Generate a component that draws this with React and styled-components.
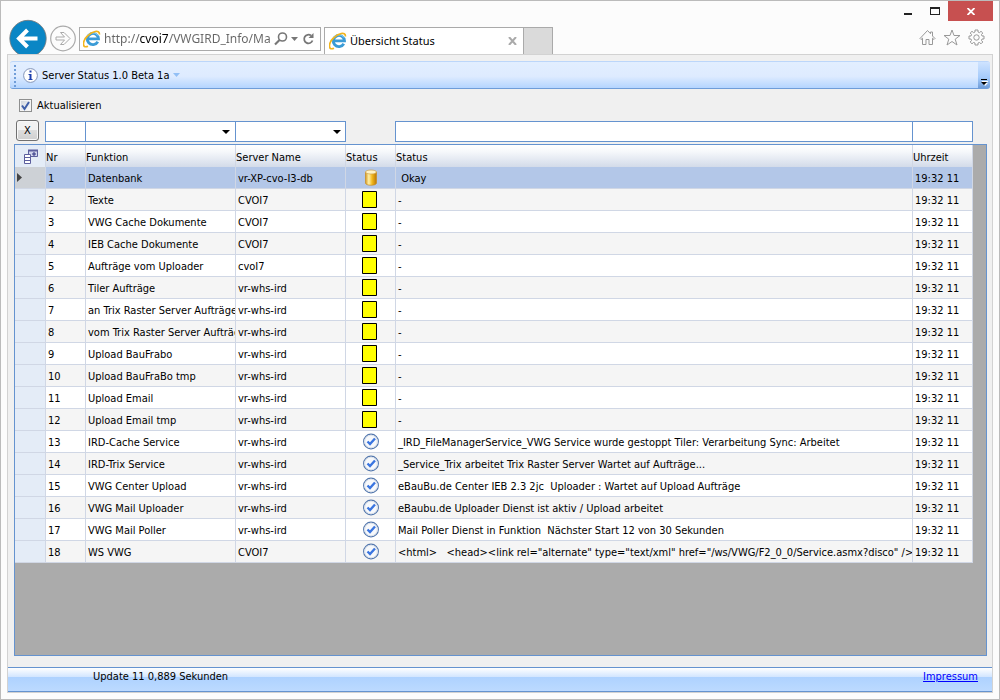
import React, {useState} from 'react';
import styled, {createGlobalStyle, css} from 'styled-components';

const GlobalStyle = createGlobalStyle`
  * {
    box-sizing: border-box;
  }

  body {
    margin: 0;
    color: #000;
    font: 11px/15px "DejaVu Sans Condensed", "DejaVu Sans", sans-serif;
  }

  button, input, select {
    margin: 0;
    padding: 0;
    border: 0;
    border-radius: 0;
    background: none;
    color: inherit;
    font: inherit;
  }

  svg {
    display: block;
    flex: none;
  }
`;

const Window = styled.div`
  display: flex;
  flex-direction: column;
  min-height: 100vh;
  padding: 0 6px 6px;
  border: 1px solid #bbb;
  background-color: #fcfcfc;
`;

const TitleBar = styled.header`
  display: flex;
  justify-content: space-between;
  height: 53px;
`;

const Navigation = styled.div`
  display: flex;
  align-items: flex-end;
`;

const NavButton = styled.button`
  width: ${props => props.$width}px;
  height: 36px;
  overflow: hidden;
`;

const AddressBar = styled.form`
  display: flex;
  align-items: center;
  gap: 3px;
  width: 242px;
  height: 24px;
  margin: 0 3px 3px 2px;
  padding: 0 4px 0 3px;
  border: 1px solid #aaa;
  background-color: #fff;
`;

// the host name is darker than the rest of the address
const AddressInput = styled.input`
  flex: 1;
  min-width: 0;
  outline: none;
  background: linear-gradient(to right, #666 36px, #000 36px, #000 65px, #666 65px);
  background-clip: text;
  -webkit-background-clip: text;
  color: transparent;
  font: 12px/20px "Noto Sans", sans-serif;
`;

const IconButton = styled.button`
  display: grid;
  place-items: center;
  flex: none;
  color: #777;
`;

const Tab = styled.div`
  display: flex;
  align-items: center;
  gap: 3px;
  width: 200px;
  height: 27px;
  padding: 0 6px 0 4px;
  border: 1px solid #aaa;
  border-bottom: 0;
  background-color: #fff;
  font: 11px/18px "Noto Sans", sans-serif;

  span {
    flex: 1;
  }
`;

const NewTab = styled.button`
  width: 29px;
  height: 27px;
  border: 1px solid #aaa;
  border-width: 1px 1px 0 0;
  background-color: #dadada;
`;

const WindowSide = styled.div`
  display: flex;
  flex-direction: column;
  align-items: flex-end;
  gap: 8px;
`;

const WindowControls = styled.div`
  display: flex;
`;

const WindowButton = styled.button`
  display: grid;
  place-items: center;
  width: ${props => props.$close ? 45 : 27}px;
  height: 20px;
  background-color: ${props => props.$close ? '#c75050' : 'transparent'};
`;

const Tools = styled.div`
  display: flex;
  gap: 7px;
  padding-right: 8px;
`;

const Page = styled.main`
  display: flex;
  flex: 1;
  flex-direction: column;
  border: 1px solid #d2d2d2;
  background-color: #f0f0f0;
`;

const Toolbar = styled.div`
  display: flex;
  height: 28px;
  margin: 6px 2px 0;
  border-top: 1px solid #bcd6fa;
  border-bottom: 1px solid #6f9dd9;
  border-radius: 3px;
  overflow: hidden;
  background: linear-gradient(#e2eeff, #deebff 55%, #b4d5ff);
`;

const Grip = styled.div`
  width: 2px;
  margin: 3px 7px 1px 4px;
  background: repeating-linear-gradient(#6f9dd9 0 2px, transparent 2px 4px);
`;

const MenuButton = styled.button`
  display: flex;
  align-items: center;
  gap: 4px;
  margin-right: auto;
`;

const Overflow = styled.button`
  display: flex;
  align-items: flex-end;
  justify-content: center;
  width: 12px;
  padding-bottom: 2px;
  background: linear-gradient(#cfe3ff, #a5cbfb 60%, #6f9dd9);
`;

const Refresh = styled.label`
  display: flex;
  align-items: center;
  gap: 5px;
  align-self: flex-start;
  height: 20px;
  margin: 6px 11px 0;
`;

const CheckFrame = styled.span`
  display: grid;
  width: 13px;
  height: 13px;

  > * {
    grid-area: 1 / 1;
  }

  svg {
    pointer-events: none;
    visibility: hidden;
  }

  input:checked + svg {
    visibility: visible;
  }
`;

const CheckInput = styled.input`
  appearance: none;
  width: 13px;
  height: 13px;
  border: 1px solid #8e8f8f;
  background: linear-gradient(135deg, #cdd3da, #fff);
  box-shadow: inset 0 0 0 1px #f4f4f4;
`;

const Filters = styled.div`
  display: grid;
  grid-template-columns: 30px 40px 150px 110px 50px 1fr 61px;
  height: 24px;
  margin: 5px 19px 0 7px;
`;

const fieldStyle = css`
  width: 100%;
  min-width: 0;
  height: 21px;
  padding: 0 3px;
  border: 1px solid #6593cf;
  border-right-width: ${props => props.$last ? 1 : 0}px;
  background-color: #fff;
  outline: none;
`;

const FilterInput = styled.input`
  ${fieldStyle}
  margin-top: 1px;
  grid-column: ${props => props.$column};
`;

const FilterSelect = styled.span`
  display: grid;
  align-items: center;
  margin-top: 1px;
  height: 21px;
  ${props => props.$last && 'margin-right: -1px;'}

  > * {
    grid-area: 1 / 1;
  }

  select {
    ${fieldStyle}
    appearance: none;
    border-right-width: ${props => props.$last ? 1 : 0}px;
  }

  svg {
    justify-self: end;
    margin-right: 5px;
    pointer-events: none;
  }
`;

const ClearButton = styled.button`
  width: 23px;
  height: 21px;
  margin-left: 1px;
  border: 1px solid #707070;
  border-radius: 3px;
  background: linear-gradient(#f2f2f2 45%, #ddd 50%, #cfcfcf);
  box-shadow: inset 0 0 0 1px #f8f8f8;
`;

const GridFrame = styled.div`
  flex: 1;
  margin: 0 5px 11px 6px;
  padding-right: 13px;
  border: 1px solid #6593cf;
  background-color: #ababab;
`;

const StatusTable = styled.table`
  width: 100%;
  table-layout: fixed;
  border-collapse: separate;
  border-spacing: 0;
  line-height: 14px;
`;

const HeadCell = styled.th`
  height: 22px;
  padding: 4px 0 0;
  border-right: 1px solid #d0d7e5;
  background: linear-gradient(#fff, #f6f8fb 30%, #d3dbe9);
  font-weight: normal;
  text-align: left;
  white-space: nowrap;
`;

const Corner = styled(HeadCell)`
  padding: 0 0 0 9px;
  background: #e4ecf7;
`;

const Row = styled.tr`
  background-color: ${props => props.$selected ? '#b3c7e8' : props.$even ? '#f5f5f5' : '#fff'};
`;

const Cell = styled.td`
  height: 22px;
  padding: 3px 0 0 2px;
  border-right: 1px solid #d0d7e5;
  border-bottom: 1px solid #d0d7e5;
  overflow: hidden;
  white-space: pre;
`;

const Selector = styled(Cell)`
  padding: 0 0 0 2px;
  background-color: ${props => props.$selected ? '#cdd1d6' : '#e4ecf7'};
`;

const StatusCell = styled(Cell)`
  padding: 0;

  svg {
    margin: 0 auto;
  }
`;

const StatusBar = styled.footer`
  display: flex;
  align-items: flex-start;
  justify-content: space-between;
  height: 25px;
  padding: 1px 14px 0 85px;
  border-top: 1px solid #6593cf;
  border-bottom: 1px solid #6593cf;
  background: linear-gradient(#fff, #d3e6ff 38%, #aed2ff 40%, #bcdaff);

  a {
    color: #00f;
  }
`;

const rows = [
  ['Datenbank', 'vr-XP-cvo-I3-db', 'database', ' Okay'],
  ['Texte', 'CVOI7', 'waiting', '-'],
  ['VWG Cache Dokumente', 'CVOI7', 'waiting', '-'],
  ['IEB Cache Dokumente', 'CVOI7', 'waiting', '-'],
  ['Aufträge vom Uploader', 'cvoI7', 'waiting', '-'],
  ['Tiler Aufträge', 'vr-whs-ird', 'waiting', '-'],
  ['an Trix Raster Server Aufträge', 'vr-whs-ird', 'waiting', '-'],
  ['vom Trix Raster Server Aufträge', 'vr-whs-ird', 'waiting', '-'],
  ['Upload BauFrabo', 'vr-whs-ird', 'waiting', '-'],
  ['Upload BauFraBo tmp', 'vr-whs-ird', 'waiting', '-'],
  ['Upload Email', 'vr-whs-ird', 'waiting', '-'],
  ['Upload Email tmp', 'vr-whs-ird', 'waiting', '-'],
  ['IRD-Cache Service', 'vr-whs-ird', 'ok', '_IRD_FileManagerService_VWG Service wurde gestoppt Tiler: Verarbeitung Sync: Arbeitet'],
  ['IRD-Trix Service', 'vr-whs-ird', 'ok', '_Service_Trix arbeitet Trix Raster Server Wartet auf Aufträge...'],
  ['VWG Center Upload', 'vr-whs-ird', 'ok', 'eBauBu.de Center IEB 2.3 2jc  Uploader : Wartet auf Upload Aufträge'],
  ['VWG Mail Uploader', 'vr-whs-ird', 'ok', 'eBaubu.de Uploader Dienst ist aktiv / Upload arbeitet'],
  ['VWG Mail Poller', 'vr-whs-ird', 'ok', 'Mail Poller Dienst in Funktion  Nächster Start 12 von 30 Sekunden'],
  ['WS VWG', 'CVOI7', 'ok', '<html>   <head><link rel="alternate" type="text/xml" href="/ws/VWG/F2_0_0/Service.asmx?disco" />'],
];

const ExplorerIcon = () => (
  <svg width="18" height="18" viewBox="0 0 18 18" fill="none">
    <path d="M14.800 11.800a5.600 5.600 0 1 1 .7-3H5" stroke="#3a9bd6" strokeWidth="2.800" />
    <path d="M4.200 6a6.600 6.600 0 0 1 11-.3" stroke="#8fd2f5" strokeWidth="1" />
    <path d="M5 16.200C-1.500 19-.5 10.500 4.500 6 9 1.500 16.500-1 16.500 4.500" stroke="#f2b51d" strokeWidth="1.700" />
  </svg>
);

const DownArrow = ({color = '#000', width = 8}) => (
  <svg width={width} height="4" viewBox="0 0 8 4" preserveAspectRatio="none">
    <path d="M0 0h8L4 4z" fill={color} />
  </svg>
);

const StatusIcon = ({status}) => {
  if (status === 'waiting') {
    return (
      <svg width="18" height="17" viewBox="0 0 18 17">
        <path d="M.5.5h14v16H.5z" fill="#ff0" stroke="#000" />
      </svg>
    );
  }

  if (status === 'database') {
    return (
      <svg width="16" height="17" viewBox="0 0 16 17">
        <defs>
          <linearGradient id="gold">
            <stop offset="0" stopColor="#d69a20" />
            <stop offset=".3" stopColor="#fff0a8" />
            <stop offset=".6" stopColor="#f3b91c" />
            <stop offset="1" stopColor="#b97706" />
          </linearGradient>
        </defs>
        <path d="M2.500 3v11c0 3 11 3 11 0V3z" fill="url(#gold)" stroke="#c98d20" strokeWidth=".7" />
        <ellipse cx="8" cy="3" rx="5.500" ry="2" fill="#fff3c4" stroke="#cfa149" strokeWidth=".7" />
      </svg>
    );
  }

  return (
    <svg width="17" height="17" viewBox="0 0 17 17" fill="none">
      <circle cx="9" cy="8.500" r="7.400" fill="#f7f9fc" stroke="#5377ad" strokeWidth="1.100" />
      <circle cx="9" cy="8.500" r="6.300" stroke="#dbe1ea" />
      <path d="M5.500 8.500l2.500 2.500 5-5.500" stroke="#3a75e0" strokeWidth="2.400" />
    </svg>
  );
};

const Browser = () => (
  <TitleBar>
    <Navigation>
      <NavButton $width={42} aria-label="Zurück">
        <svg width="42" height="36" viewBox="0 0 42 36" fill="none">
          <circle cx="21" cy="20.500" r="18.200" fill="#0a86c5" stroke="#777" strokeWidth=".8" />
          <path d="M30.500 20.500H13M20.500 12l-8.500 8.500 8.500 8.500" stroke="#fff" strokeWidth="4" />
        </svg>
      </NavButton>
      <NavButton $width={28} aria-label="Vorwärts">
        <svg width="28" height="36" viewBox="0 0 28 36" fill="none" stroke="#aaa">
          <circle cx="14" cy="20.500" r="12.300" strokeWidth="1.200" />
          <path d="M7 19h8.500l-4-4.500h3.500l6 6-6 6h-3.500l4-4.500H7z" />
        </svg>
      </NavButton>
      <AddressBar onSubmit={e => e.preventDefault()}>
        <ExplorerIcon />
        <AddressInput aria-label="Adresse" defaultValue="http://cvoi7/VWGIRD_Info/Ma" />
        <IconButton type="button" aria-label="Suchen">
          <svg width="14" height="14" viewBox="0 0 14 14" fill="none" stroke="currentColor">
            <circle cx="8.500" cy="5" r="4" strokeWidth="1.600" />
            <path d="M5.500 8L1 12.500" strokeWidth="2.200" />
          </svg>
        </IconButton>
        <IconButton type="button" aria-label="Verlauf">
          <DownArrow color="#777" width={7} />
        </IconButton>
        <IconButton type="submit" aria-label="Neu laden">
          <svg width="15" height="14" viewBox="0 0 15 14" fill="none">
            <path d="M11.500 8.500A4.300 4.300 0 1 1 10 3.500" stroke="currentColor" strokeWidth="1.800" />
            <path d="M12.500 1v5h-5z" fill="currentColor" />
          </svg>
        </IconButton>
      </AddressBar>
      <Tab>
        <ExplorerIcon />
        <span>Übersicht Status</span>
        <IconButton aria-label="Tab schließen">
          <svg width="9" height="8" viewBox="0 0 9 8" stroke="#aaa" strokeWidth="2">
            <path d="M1 0l7 8M8 0L1 8" />
          </svg>
        </IconButton>
      </Tab>
      <NewTab aria-label="Neuer Tab" />
    </Navigation>
    <WindowSide>
      <WindowControls>
        <WindowButton aria-label="Minimieren">
          <svg width="8" height="8" viewBox="0 0 8 8"><path d="M0 6h8v2H0z" fill="#222" /></svg>
        </WindowButton>
        <WindowButton aria-label="Maximieren">
          <svg width="10" height="8" viewBox="0 0 10 8"><path d="M0 0h10v8H0zM1 2v5h8V2z" fill="#222" fillRule="evenodd" /></svg>
        </WindowButton>
        <WindowButton $close aria-label="Schließen">
          <svg width="8" height="7" viewBox="0 0 8 7" stroke="#fff" strokeWidth="1.800"><path d="M.5 0l7 7M7.500 0l-7 7" /></svg>
        </WindowButton>
      </WindowControls>
      <Tools>
        <IconButton aria-label="Startseite">
          <svg width="17" height="17" viewBox="0 0 17 17" fill="none" stroke="#999">
            <path d="M1 9.500l7.500-8 3 3.200V3h2v4l2.500 2.500-1 1-1.500-1.300V15.500h-3.500v-5h-3v5H3.500V9.200L2 10.500z" />
          </svg>
        </IconButton>
        <IconButton aria-label="Favoriten">
          <svg width="18" height="17" viewBox="0 0 18 17" fill="none" stroke="#999">
            <path d="M9 1l2 5.500h6l-4.800 3.700 1.800 5.800-5-3.500L4 16l1.800-5.800L1 6.500h6z" />
          </svg>
        </IconButton>
        <IconButton aria-label="Extras">
          <svg width="17" height="17" viewBox="0 0 17 17" fill="none" stroke="#999">
            <path d="M7 1h3v2l1.500.6L13 2.300 14.800 4l-1.300 1.500.5 1.500h2v3h-2l-.5 1.500 1.300 1.500-1.800 1.800-1.500-1.300-1.500.5v2H7v-2l-1.500-.5L4 14.800 2.200 13l1.300-1.500L3 10H1V7h2l.5-1.500L2.200 4 4 2.300l1.500 1.300L7 3z" />
            <circle cx="8.500" cy="8.500" r="2.700" />
          </svg>
        </IconButton>
      </Tools>
    </WindowSide>
  </TitleBar>
);

export const App = () => {
  const [refresh, setRefresh] = useState(true);
  const [selected, setSelected] = useState(0);

  return (
    <Window>
      <GlobalStyle />
      <Browser />
      <Page>
        <Toolbar>
          <Grip />
          <MenuButton>
            <svg width="15" height="15" viewBox="0 0 15 15">
              <circle cx="7.500" cy="7.500" r="6.900" fill="#fff" stroke="#8294b8" />
              <path d="M6.500 2.500h2v2h-2zM5.500 6h3v5h1v1h-4v-1h1V7h-1z" fill="#1c3fae" />
            </svg>
            Server Status 1.0 Beta 1a
            <DownArrow color="#92bff5" width={7} />
          </MenuButton>
          <Overflow aria-label="Weitere Optionen">
            <svg width="7" height="7" viewBox="0 0 7 7">
              <path d="M1 2h6v1H1zM2 4h5L4 7z" fill="#fff" />
              <path d="M0 0h6v1H0zM0 3h6L3 6z" fill="#000" />
            </svg>
          </Overflow>
        </Toolbar>

        <Refresh>
          <CheckFrame>
            <CheckInput type="checkbox" checked={refresh} onChange={e => setRefresh(e.target.checked)} />
            <svg width="13" height="13" viewBox="0 0 13 13" fill="none">
              <path d="M3 6.500l2.500 3.500L10 3" stroke="#3f5fa8" strokeWidth="2" />
            </svg>
          </CheckFrame>
          Aktualisieren
        </Refresh>

        <Filters>
          <ClearButton>X</ClearButton>
          <FilterInput aria-label="Nr" />
          <FilterSelect>
            <select aria-label="Funktion" />
            <DownArrow />
          </FilterSelect>
          <FilterSelect $last>
            <select aria-label="Server Name" />
            <DownArrow />
          </FilterSelect>
          <FilterInput aria-label="Status" $column={6} />
          <FilterInput aria-label="Uhrzeit" $last />
        </Filters>

        <GridFrame>
          <StatusTable>
            <colgroup>
              <col width="31" />
              <col width="40" />
              <col width="150" />
              <col width="110" />
              <col width="50" />
              <col />
              <col width="60" />
            </colgroup>
            <thead>
              <tr>
                <Corner aria-label="Spalten">
                  <svg width="14" height="15" viewBox="0 0 14 15" fill="#fff" stroke="#5c5f9e">
                    <path d="M4.500 1.500h9v6h-9z" fill="#cfd4ec" />
                    <path d="M4 1.500h10" strokeWidth="2" />
                    <path d="M.5 5.500h6v9h-6zM.5 8.500h6M.5 11.500h6" />
                    <path d="M8 5h4M10 3v4" stroke="#2d3080" />
                  </svg>
                </Corner>
                <HeadCell>Nr</HeadCell>
                <HeadCell>Funktion</HeadCell>
                <HeadCell>Server Name</HeadCell>
                <HeadCell>Status</HeadCell>
                <HeadCell>Status</HeadCell>
                <HeadCell>Uhrzeit</HeadCell>
              </tr>
            </thead>
            <tbody>
              {
                rows.map(([name, server, status, message], i) => {
                  return (
                    <Row key={name} $selected={i === selected} $even={i % 2 === 1} onClick={() => setSelected(i)}>
                      <Selector $selected={i === selected}>
                        {i === selected && (
                          <svg width="5" height="9" viewBox="0 0 5 9"><path d="M0 0l5 4.500L0 9z" fill="#444" /></svg>
                        )}
                      </Selector>
                      <Cell>{i + 1}</Cell>
                      <Cell>{name}</Cell>
                      <Cell>{server}</Cell>
                      <StatusCell><StatusIcon status={status} /></StatusCell>
                      <Cell>{message}</Cell>
                      <Cell>19:32 11</Cell>
                    </Row>
                  )
                })
              }
            </tbody>
          </StatusTable>
        </GridFrame>

        <StatusBar>
          <span>Update 11 0,889 Sekunden</span>
          <a href="#impressum">Impressum</a>
        </StatusBar>
      </Page>
    </Window>
  )
}

export default App;
